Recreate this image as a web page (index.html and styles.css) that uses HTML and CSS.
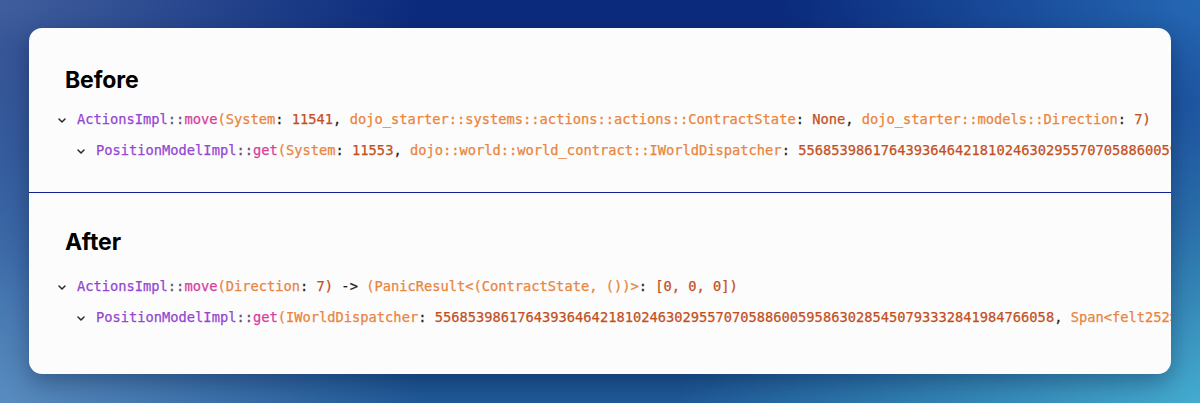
FILE: index.html
```html
<!DOCTYPE html>
<html>
<head>
<meta charset="utf-8">
<link rel="stylesheet" href="styles.css">
</head>
<body>
<div class="card">
  <section class="panel panel-before">
    <h2 class="title">Before</h2>
    <div class="row">
      <svg class="chev" viewBox="0 0 8 5" width="8" height="5"><polyline points="1,1 4,4 7,1"/></svg>
      <code class="line"><span class="ty">ActionsImpl</span><span class="sep">::</span><span class="fn">move</span><span class="p">(System</span><span class="k">: </span><span class="v">11541</span><span class="k">, </span><span class="p">dojo_starter::systems::actions::actions::ContractState</span><span class="k">: </span><span class="v">None</span><span class="k">, </span><span class="p">dojo_starter::models::Direction</span><span class="k">: </span><span class="v">7)</span></code>
    </div>
    <div class="row nested">
      <svg class="chev" viewBox="0 0 8 5" width="8" height="5"><polyline points="1,1 4,4 7,1"/></svg>
      <code class="line"><span class="ty">PositionModelImpl</span><span class="sep">::</span><span class="fn">get</span><span class="p">(System</span><span class="k">: </span><span class="v">11553</span><span class="k">, </span><span class="p">dojo::world::world_contract::IWorldDispatcher</span><span class="k">: </span><span class="v">556853986176439364642181024630295570705886005958630285450793332841984766058</span><span class="k">, </span><span class="p">Span&lt;felt252&gt;</span><span class="k">: </span><span class="v">[1, 2])</span></code>
    </div>
  </section>
  <section class="panel panel-after">
    <h2 class="title">After</h2>
    <div class="row">
      <svg class="chev" viewBox="0 0 8 5" width="8" height="5"><polyline points="1,1 4,4 7,1"/></svg>
      <code class="line"><span class="ty">ActionsImpl</span><span class="sep">::</span><span class="fn">move</span><span class="p">(Direction</span><span class="k">: </span><span class="v">7)</span><span class="k"> -&gt; </span><span class="p">(PanicResult&lt;(ContractState, ())&gt;</span><span class="k">: </span><span class="v">[0, 0, 0])</span></code>
    </div>
    <div class="row nested">
      <svg class="chev" viewBox="0 0 8 5" width="8" height="5"><polyline points="1,1 4,4 7,1"/></svg>
      <code class="line"><span class="ty">PositionModelImpl</span><span class="sep">::</span><span class="fn">get</span><span class="p">(IWorldDispatcher</span><span class="k">: </span><span class="v">556853986176439364642181024630295570705886005958630285450793332841984766058</span><span class="k">, </span><span class="p">Span&lt;felt252&gt;</span><span class="k">: </span><span class="v">[1, 2])</span></code>
    </div>
  </section>
</div>
</body>
</html>
```
FILE: styles.css
```css
html, body {
  margin: 0;
  height: 100%;
}
body {
  width: 1200px;
  height: 403px;
  box-sizing: border-box;
  padding: 28px 29px 29px 29px;
  overflow: hidden;
  background:
    radial-gradient(ellipse 520px 300px at 1200px 403px, rgba(70,175,210,0.95), rgba(70,175,210,0) 100%),
    radial-gradient(ellipse 420px 360px at 0px 403px, rgba(95,145,195,0.9), rgba(95,145,195,0) 100%),
    radial-gradient(ellipse 420px 260px at 0px 0px, rgba(70,100,160,0.9), rgba(70,100,160,0) 100%),
    radial-gradient(ellipse 420px 300px at 1200px 0px, rgba(40,110,185,0.9), rgba(40,110,185,0) 100%),
    linear-gradient(180deg, #0b2a7c 0%, #163f8a 60%, #1f5a98 100%);
  font-family: "Inter", "Liberation Sans", sans-serif;
}
.card {
  height: 346px;
  background: #fcfcfc;
  border-radius: 13px;
  overflow: hidden;
  box-shadow: 0 8px 24px rgba(0, 10, 40, 0.35);
  display: flex;
  flex-direction: column;
}
.panel {
  display: flex;
  flex-direction: column;
}
.panel-before {
  padding: 38px 0 26px 0;
  border-bottom: 1px solid #12238f;
}
.panel-after {
  padding: 35px 0 0 0;
}
.title {
  margin: 0 0 10px 36px;
  font-size: 23px;
  line-height: 28px;
  font-weight: 700;
  color: #000;
  letter-spacing: -0.1px;
}
.panel-after .title {
  margin-bottom: 15px;
}
.row {
  height: 31px;
  display: flex;
  align-items: center;
  padding-left: 29px;
  white-space: nowrap;
}
.row.nested {
  padding-left: 48px;
}
.chev {
  flex: none;
  margin-right: 11px;
  margin-top: 1px;
}
.chev polyline {
  fill: none;
  stroke: #2a2a2a;
  stroke-width: 1.5;
  stroke-linecap: round;
  stroke-linejoin: round;
}
.line {
  font-family: "DejaVu Sans Mono", "Liberation Mono", monospace;
  font-size: 13.73px;
  line-height: 31px;
  color: #262626;
  -webkit-text-stroke: 0.25px currentColor;
}
.ty { color: #9446d2; }
.sep { color: #5e4d78; }
.fn { color: #d6409c; }
.p { color: #e9853f; }
.v { color: #c2501f; }
.k { color: #1e1e1e; }
```
